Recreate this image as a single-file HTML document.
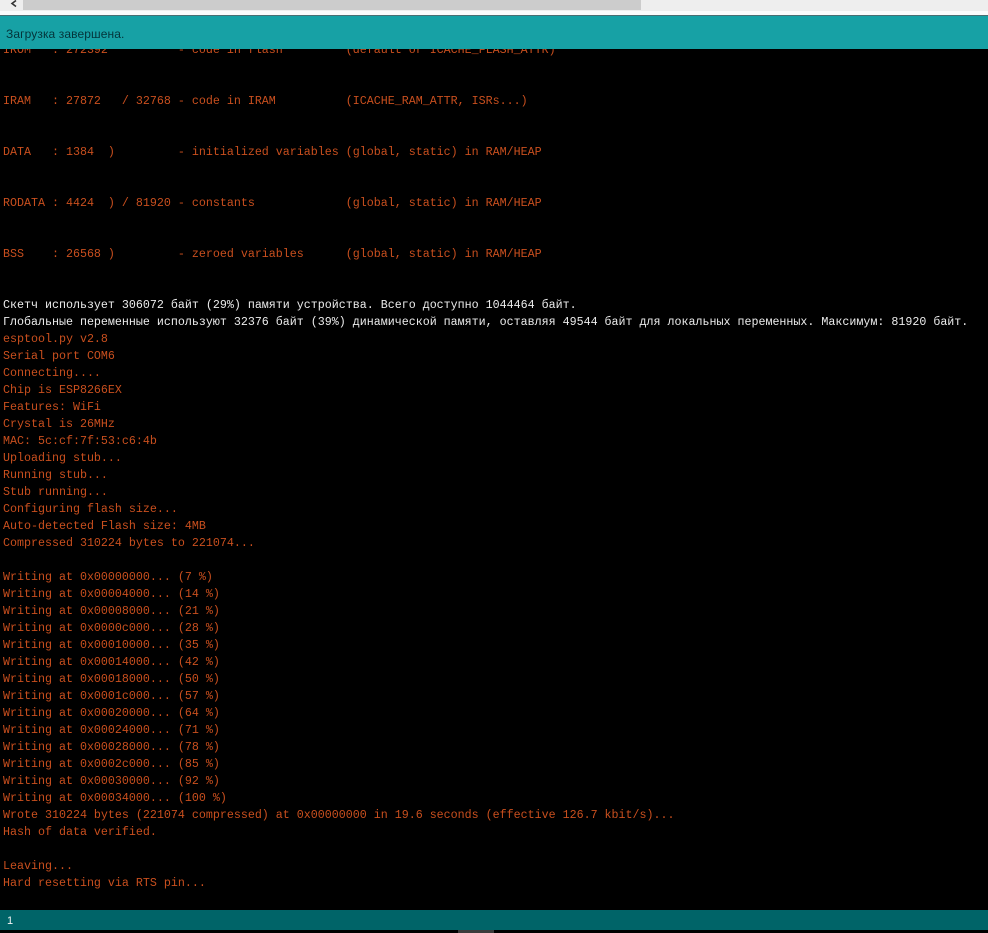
<!DOCTYPE html>
<html><head><meta charset="utf-8"><style>
html,body{margin:0;padding:0;background:#000;width:988px;height:933px;overflow:hidden}
div{position:absolute}
pre{position:absolute;left:3px;top:42px;margin:0;font:11.67px/17px "Liberation Mono","DejaVu Sans Mono",monospace;color:#c94f1e;white-space:pre}
pre b{font-weight:normal;color:#ececec}
</style></head><body>
<pre>IROM   : 272392          - code in flash         (default or ICACHE_FLASH_ATTR)


IRAM   : 27872   / 32768 - code in IRAM          (ICACHE_RAM_ATTR, ISRs...)


DATA   : 1384  )         - initialized variables (global, static) in RAM/HEAP


RODATA : 4424  ) / 81920 - constants             (global, static) in RAM/HEAP


BSS    : 26568 )         - zeroed variables      (global, static) in RAM/HEAP


<b>Скетч использует 306072 байт (29%) памяти устройства. Всего доступно 1044464 байт.</b>
<b>Глобальные переменные используют 32376 байт (39%) динамической памяти, оставляя 49544 байт для локальных переменных. Максимум: 81920 байт.</b>
esptool.py v2.8
Serial port COM6
Connecting....
Chip is ESP8266EX
Features: WiFi
Crystal is 26MHz
MAC: 5c:cf:7f:53:c6:4b
Uploading stub...
Running stub...
Stub running...
Configuring flash size...
Auto-detected Flash size: 4MB
Compressed 310224 bytes to 221074...

Writing at 0x00000000... (7 %)
Writing at 0x00004000... (14 %)
Writing at 0x00008000... (21 %)
Writing at 0x0000c000... (28 %)
Writing at 0x00010000... (35 %)
Writing at 0x00014000... (42 %)
Writing at 0x00018000... (50 %)
Writing at 0x0001c000... (57 %)
Writing at 0x00020000... (64 %)
Writing at 0x00024000... (71 %)
Writing at 0x00028000... (78 %)
Writing at 0x0002c000... (85 %)
Writing at 0x00030000... (92 %)
Writing at 0x00034000... (100 %)
Wrote 310224 bytes (221074 compressed) at 0x00000000 in 19.6 seconds (effective 126.7 kbit/s)...
Hash of data verified.

Leaving...
Hard resetting via RTS pin...</pre>
<div style="left:0;top:0;width:988px;height:11px;background:#eeeeee"></div>
<div style="left:23px;top:0;width:618px;height:10px;background:#cccccc"></div>
<svg style="position:absolute;left:10px;top:0" width="8" height="8" viewBox="0 0 8 8"><path d="M6 0.5L2 3.5L6 6.5" fill="none" stroke="#333" stroke-width="1.6"/></svg>
<div style="left:0;top:11px;width:988px;height:4px;background:#fbfbfb"></div>
<div style="left:0;top:15px;width:988px;height:1px;background:#4a6e72"></div>
<div style="left:0;top:16px;width:988px;height:33px;background:#17a1a5"></div>
<div style="left:6px;top:27px;font:12px/15px 'Liberation Sans','DejaVu Sans',sans-serif;color:#04343a;letter-spacing:.1px">Загрузка завершена.</div>
<div style="left:0;top:910px;width:988px;height:20px;background:#006468"></div>
<div style="left:7px;top:915px;font:11px/13px 'Liberation Sans',sans-serif;color:#f4f4f4">1</div>
<div style="left:458px;top:930px;width:36px;height:3px;background:#3c3c3c"></div>
</body></html>
